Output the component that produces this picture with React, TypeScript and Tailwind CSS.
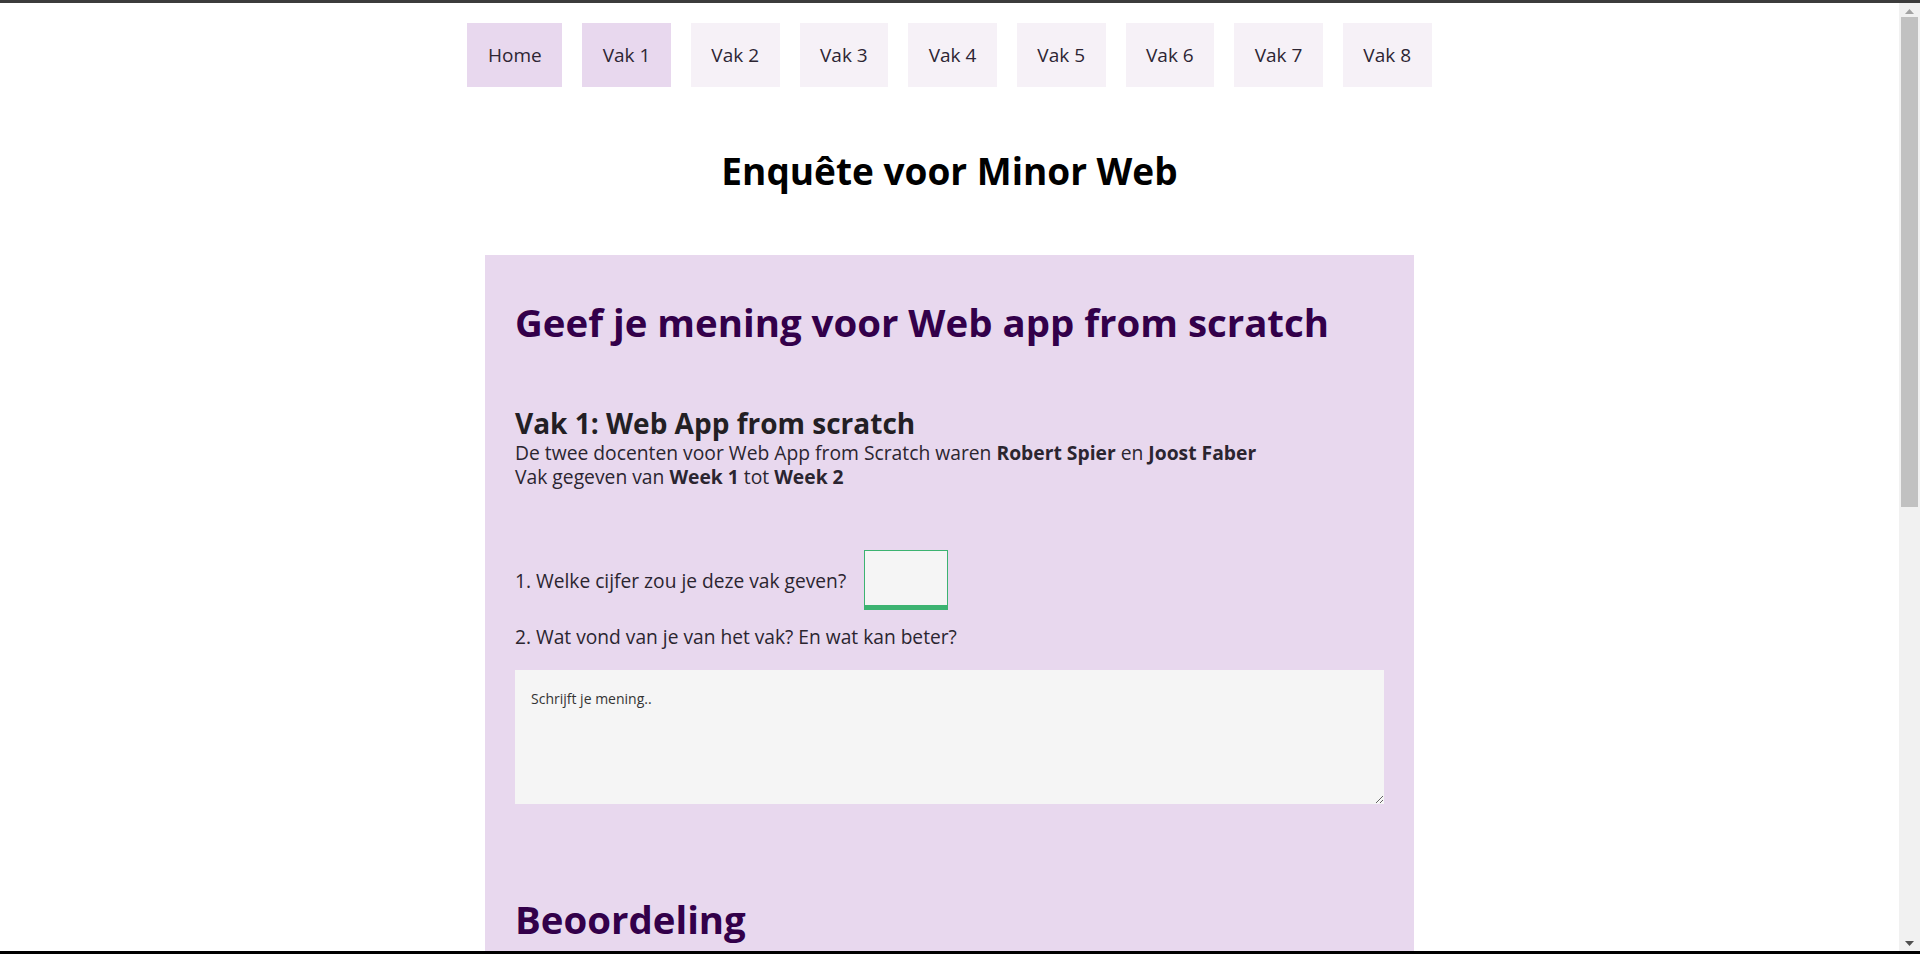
const tabs = ["Home", "Vak 1", "Vak 2", "Vak 3", "Vak 4", "Vak 5", "Vak 6", "Vak 7", "Vak 8"];
const active = ["Home", "Vak 1"];

export default function App() {
  return (
    <div className="flex h-[954px] flex-col overflow-hidden bg-white font-['Open_Sans',sans-serif] text-[#2b2530]">
      <div className="h-[3px] shrink-0 bg-[#3c3c3c]" />
      <div className="flex min-h-0 flex-1">
        <main className="min-w-0 flex-1 overflow-hidden">
          {/* Nav */}
          <nav className="flex justify-center gap-5 pt-[20px]">
            {tabs.map((t) => (
              <a
                key={t}
                href="#"
                className={`flex h-16 items-center px-[20.5px] text-[19px] text-[#2d2533] ${
                  active.includes(t) ? "bg-[#e8d8ee]" : "bg-[#f6f1f7]"
                }`}
              >
                {t}
              </a>
            ))}
          </nav>

          <h1 className="mt-[62px] mb-[62px] text-center text-[37px] leading-[44px] font-bold text-black">
            Enquête voor Minor Web
          </h1>

          {/* Form panel */}
          <section className="mx-auto w-[929px] bg-[#e8d8ee] px-[30px] pt-[44px] pb-10">
            <h2 className="text-[38.4px] leading-[46px] font-bold text-[#33004a]">
              Geef je mening voor Web app from scratch
            </h2>

            <div className="mt-[60px]">
              <h3 className="text-[28px] leading-[36px] font-bold text-[#231f24]">
                Vak 1: Web App from scratch
              </h3>
              <p className="text-[19.3px] leading-[24px]">
                De twee docenten voor Web App from Scratch waren <b>Robert Spier</b> en <b>Joost Faber</b>
              </p>
              <p className="text-[19.3px] leading-[24px]">
                Vak gegeven van <b>Week 1</b> tot <b>Week 2</b>
              </p>
            </div>

            <label className="mt-[61px] flex items-center gap-[18px] text-[19.2px] leading-[25px]">
              <span>1. Welke cijfer zou je deze vak geven?</span>
              <input
                type="text"
                className="h-[60px] w-[84px] border border-b-[5px] border-[#3cb371] bg-[#f5f5f5] outline-none"
              />
            </label>

            <p className="mt-[14px] text-[19.2px] leading-[25px]">
              2. Wat vond van je van het vak? En wat kan beter?
            </p>

            <textarea
              placeholder="Schrijft je mening.."
              className="mt-[21px] block h-[134px] w-full bg-[#f5f5f5] px-4 py-[18px] text-[14px] outline-none placeholder:text-[#333]"
            />

            <h2 className="mt-[92px] text-[38.4px] leading-[46px] font-bold text-[#33004a]">
              Beoordeling
            </h2>
          </section>
        </main>

        {/* Scrollbar */}
        <div className="flex w-[21px] shrink-0 flex-col items-center bg-[#f1f1f1]">
          <svg width="9" height="5" viewBox="0 0 9 5" className="mt-[6px]">
            <path d="M0 5 L4.5 0 L9 5 Z" fill="#a3a3a3" />
          </svg>
          <div className="mt-[3px] h-[490px] w-[17px] bg-[#c1c1c1]" />
          <div className="flex-1" />
          <svg width="9" height="5" viewBox="0 0 9 5" className="mb-[5px]">
            <path d="M0 0 L9 0 L4.5 5 Z" fill="#505050" />
          </svg>
        </div>
      </div>
      <div className="h-[3px] shrink-0 bg-black" />
    </div>
  );
}
